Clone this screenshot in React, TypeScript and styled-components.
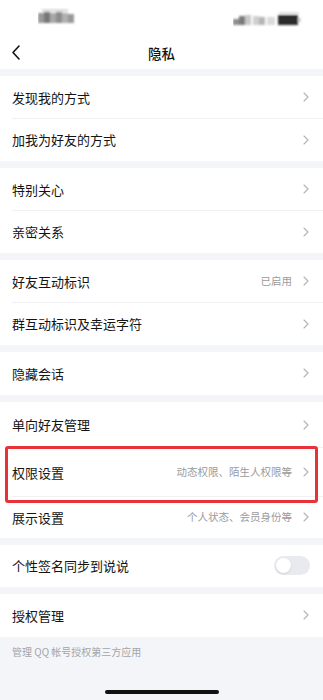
import React from "react";
import styled, { createGlobalStyle } from "styled-components";

const Global = createGlobalStyle`
  html, body { margin: 0; padding: 0; background: #f4f5f9; }
  body { font-family: "Noto Sans CJK SC", "Noto Sans", sans-serif; -webkit-font-smoothing: antialiased; }
  * { box-sizing: border-box; }
`;

const Page = styled.div`
  width: 323px;
  height: 700px;
  background: #f4f5f9;
  display: flex;
  flex-direction: column;
  position: relative;
  overflow: hidden;
`;

const StatusBar = styled.div`
  height: 36px;
  background: #fff;
  display: flex;
  align-items: flex-start;
  justify-content: space-between;
  padding: 0 18px 0 38px;
`;

const NavBar = styled.div`
  height: 33px;
  background: #fff;
  display: flex;
  align-items: center;
  justify-content: center;
  position: relative;
`;

const BackButton = styled.div`
  position: absolute;
  left: 12px;
  top: 9px;
  width: 10px;
  height: 16px;
  display: flex;
`;

const Title = styled.div`
  font-size: 13.5px;
  font-weight: 500;
  color: #111;
  letter-spacing: 0;
`;

const Body = styled.div`
  display: flex;
  flex-direction: column;
  gap: 7px;
  padding-top: 7px;
`;

const Section = styled.div`
  background: #fff;
  display: flex;
  flex-direction: column;
  position: relative;
`;

const Row = styled.div<{ $h?: number; $sep?: boolean }>`
  height: ${(p) => p.$h ?? 42.5}px;
  display: flex;
  align-items: center;
  padding: 0 14px 0 12px;
  position: relative;
  &::after {
    content: "";
    display: ${(p) => (p.$sep ? "block" : "none")};
    position: absolute;
    left: 12px;
    right: 0;
    bottom: 0;
    height: 1px;
    background: #f1f1f4;
  }
`;

const Label = styled.div`
  flex: 1;
  font-size: 13px;
  color: #141414;
  line-height: 1;
`;

const Value = styled.div`
  font-size: 10.5px;
  color: #9a9a9e;
  margin-right: 11px;
  line-height: 1;
`;

const Toggle = styled.div`
  width: 36px;
  height: 19px;
  border-radius: 10px;
  background: #e9eaef;
  display: flex;
  align-items: center;
  padding: 0 2px;
  margin-right: -1px;
`;

const Knob = styled.div`
  width: 15px;
  height: 15px;
  border-radius: 50%;
  background: #fff;
  box-shadow: 0 1px 2px rgba(0, 0, 0, 0.12);
`;

const Highlight = styled.div`
  position: absolute;
  left: 5px;
  right: 5px;
  top: 44px;
  height: 57px;
  border: 3px solid #e8323a;
  border-radius: 3px;
  pointer-events: none;
`;

const Footer = styled.div`
  font-size: 10px;
  color: #a3a4a8;
  padding: 9px 12px 0;
  line-height: 1.2;
`;

const HomeBar = styled.div`
  position: absolute;
  left: 105px;
  bottom: 6px;
  width: 114px;
  height: 4px;
  border-radius: 2px;
  background: #111;
`;

const Chevron = () => (
  <svg width="6" height="10" viewBox="0 0 6 10">
    <path d="M1 1 L5 5 L1 9" fill="none" stroke="#b4b4b8" strokeWidth="1.1" strokeLinecap="round" strokeLinejoin="round" />
  </svg>
);

const BackIcon = () => (
  <svg width="8" height="15" viewBox="0 0 8 15">
    <path d="M7 1 L1 7.5 L7 14" fill="none" stroke="#111" strokeWidth="1.6" strokeLinecap="round" strokeLinejoin="round" />
  </svg>
);

const LeftMosaic = () => (
  <svg width="40" height="20" viewBox="0 0 40 20" style={{ marginTop: 8 }}>
    <defs>
      <filter id="bl" x="-20%" y="-20%" width="140%" height="140%">
        <feGaussianBlur stdDeviation="0.8" />
      </filter>
    </defs>
    <g filter="url(#bl)">
      <rect x="0" y="5" width="6" height="10" fill="#9a9a9a" />
      <rect x="6" y="4" width="6" height="11" fill="#777" />
      <rect x="12" y="5" width="6" height="10" fill="#a8a8a8" />
      <rect x="18" y="4" width="6" height="11" fill="#8c8c8c" />
      <rect x="24" y="5" width="6" height="10" fill="#b0b0b0" />
      <rect x="30" y="6" width="6" height="9" fill="#999" />
      <rect x="4" y="1" width="26" height="3" fill="#ddd" />
    </g>
  </svg>
);

const RightMosaic = () => (
  <svg width="72" height="16" viewBox="0 0 72 16" style={{ marginTop: 11 }}>
    <defs>
      <filter id="br" x="-20%" y="-20%" width="140%" height="140%">
        <feGaussianBlur stdDeviation="0.8" />
      </filter>
    </defs>
    <g filter="url(#br)">
      <rect x="0" y="8" width="6" height="6" fill="#8e8e8e" />
      <rect x="6" y="5" width="6" height="9" fill="#7a7a7a" />
      <rect x="12" y="4" width="6" height="10" fill="#c8c8c8" />
      <rect x="20" y="5" width="6" height="9" fill="#cfcfcf" />
      <rect x="26" y="6" width="6" height="8" fill="#b5b5b5" />
      <rect x="34" y="6" width="8" height="8" fill="#dadada" />
      <rect x="45" y="4" width="20" height="10" fill="#2a2a2a" />
      <rect x="46" y="1" width="20" height="2" fill="#ddd" />
      <rect x="65" y="7" width="3" height="4" fill="#cfcfcf" />
    </g>
  </svg>
);

type Item = { label: string; value?: string; h?: number; toggle?: boolean };

const sections: Item[][] = [
  [{ label: "发现我的方式" }, { label: "加我为好友的方式" }],
  [{ label: "特别关心" }, { label: "亲密关系" }],
  [{ label: "好友互动标识", value: "已启用" }, { label: "群互动标识及幸运字符" }],
  [{ label: "隐藏会话" }],
  [
    { label: "单向好友管理", h: 46 },
    { label: "权限设置", value: "动态权限、陌生人权限等", h: 49 },
    { label: "展示设置", value: "个人状态、会员身份等", h: 41 },
  ],
  [{ label: "个性签名同步到说说", toggle: true }],
  [{ label: "授权管理" }],
];

export default function App() {
  return (
    <Page>
      <Global />
      <StatusBar>
        <LeftMosaic />
        <RightMosaic />
      </StatusBar>
      <NavBar>
        <BackButton>
          <BackIcon />
        </BackButton>
        <Title>隐私</Title>
      </NavBar>
      <Body>
        {sections.map((items, si) => (
          <Section key={si}>
            {items.map((it, i) => (
              <Row key={it.label} $h={it.h} $sep={i < items.length - 1}>
                <Label>{it.label}</Label>
                {it.value && <Value>{it.value}</Value>}
                {it.toggle ? (
                  <Toggle>
                    <Knob />
                  </Toggle>
                ) : (
                  <Chevron />
                )}
              </Row>
            ))}
            {si === 4 && <Highlight />}
          </Section>
        ))}
      </Body>
      <Footer>管理 QQ 帐号授权第三方应用</Footer>
      <HomeBar />
    </Page>
  );
}
